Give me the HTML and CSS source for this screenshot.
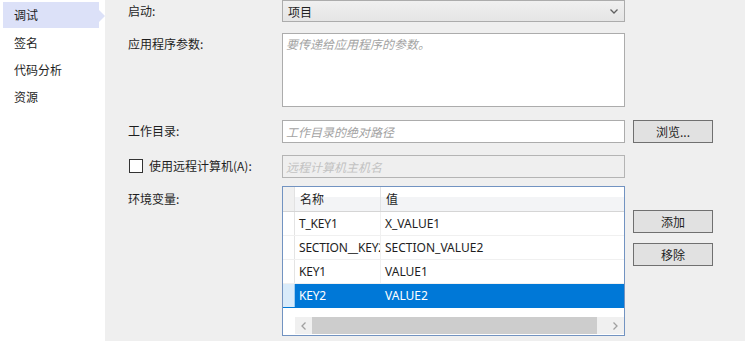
FILE: index.html
```html
<!DOCTYPE html>
<html lang="zh-CN">
<head>
    <meta charset="UTF-8">
    <title>调试</title>
    <link rel="stylesheet" href="styles.css">
</head>
<body>
    <div class="window">
        <ul class="nav">
            <li class="nav-item active">调试</li>
            <li class="nav-item">签名</li>
            <li class="nav-item">代码分析</li>
            <li class="nav-item">资源</li>
        </ul>

        <div class="page">
            <div class="row row-launch">
                <label class="label">启动:</label>
                <div class="select">
                    <span>项目</span>
                    <svg class="chevron" width="8" height="5" viewBox="0 0 8 5"><path d="M0.5 0.5 L4 4 L7.5 0.5" fill="none" stroke="#606060" stroke-width="1.3"/></svg>
                </div>
            </div>

            <div class="row row-args">
                <label class="label">应用程序参数:</label>
                <div class="textarea"><span class="placeholder">要传递给应用程序的参数。</span></div>
            </div>

            <div class="row row-dir">
                <label class="label">工作目录:</label>
                <div class="input"><span class="placeholder">工作目录的绝对路径</span></div>
                <button class="btn">浏览...</button>
            </div>

            <div class="row row-remote">
                <label class="label check-label"><span class="checkbox"></span>使用远程计算机(A):</label>
                <div class="input disabled"><span class="placeholder">远程计算机主机名</span></div>
            </div>

            <div class="row row-env">
                <label class="label">环境变量:</label>
                <div class="grid">
                    <div class="grid-head">
                        <div class="cell corner"></div>
                        <div class="cell col-name">名称</div>
                        <div class="cell">值</div>
                    </div>
                    <div class="grid-row">
                        <div class="cell rowhead"></div>
                        <div class="cell col-name">T_KEY1</div>
                        <div class="cell">X_VALUE1</div>
                    </div>
                    <div class="grid-row">
                        <div class="cell rowhead"></div>
                        <div class="cell col-name">SECTION__KEY2</div>
                        <div class="cell">SECTION_VALUE2</div>
                    </div>
                    <div class="grid-row">
                        <div class="cell rowhead"></div>
                        <div class="cell col-name">KEY1</div>
                        <div class="cell">VALUE1</div>
                    </div>
                    <div class="grid-row selected">
                        <div class="cell rowhead"></div>
                        <div class="cell col-name">KEY2</div>
                        <div class="cell">VALUE2</div>
                    </div>
                    <div class="grid-space"></div>
                    <div class="hscroll">
                        <div class="scroll-btn">
                            <svg width="5" height="8" viewBox="0 0 5 8"><path d="M4.5 0.5 L1 4 L4.5 7.5" fill="none" stroke="#a0a0a0" stroke-width="1.3"/></svg>
                        </div>
                        <div class="scroll-thumb"></div>
                        <div class="scroll-track"></div>
                        <div class="scroll-btn">
                            <svg width="5" height="8" viewBox="0 0 5 8"><path d="M0.5 0.5 L4 4 L0.5 7.5" fill="none" stroke="#a0a0a0" stroke-width="1.3"/></svg>
                        </div>
                    </div>
                </div>
                <div class="side-buttons">
                    <button class="btn">添加</button>
                    <button class="btn">移除</button>
                </div>
            </div>
        </div>
    </div>
</body>
</html>
```

FILE: styles.css
```css
/* General */
body {
    margin: 0;
    font-family: "Noto Sans CJK SC", "Noto Sans", sans-serif;
    font-size: 12px;
    color: #1e1e1e;
    background: #efefef;
}

.window {
    display: flex;
    width: 745px;
    height: 341px;
    overflow: hidden;
}

/* Sidebar */
.nav {
    list-style: none;
    margin: 0;
    padding: 2px 6px 0 3px;
    width: 96px;
    background: #fff;
}

.nav-item {
    position: relative;
    height: 27px;
    line-height: 27px;
    padding-left: 11px;
}

.nav-item.active {
    height: 26px;
    line-height: 26px;
    margin-bottom: 1px;
    background: #dce1f8;
}

.nav-item.active::after {
    content: "";
    position: absolute;
    right: -6px;
    top: 8px;
    border-top: 6px solid transparent;
    border-bottom: 6px solid transparent;
    border-left: 6px solid #dce1f8;
}

/* Form */
.page {
    flex: 1;
    padding-left: 23px;
}

.row {
    display: flex;
    align-items: flex-start;
}

.label {
    width: 154px;
    flex-shrink: 0;
    height: 22px;
    line-height: 22px;
}

.row-args { margin-top: 11px; }
.row-dir { margin-top: 13px; }
.row-remote { margin-top: 12px; }
.row-env { margin-top: 8px; }

.row-env .label {
    line-height: 26px;
}

.select, .textarea, .input {
    box-sizing: border-box;
    width: 343px;
    border: 1px solid #acacac;
    background: #fff;
}

.select {
    display: flex;
    align-items: center;
    justify-content: space-between;
    height: 22px;
    padding: 0 5px 0 5px;
    background: linear-gradient(#f0f0f0, #e5e5e5);
}

.chevron {
    margin-right: 1px;
}

.textarea {
    height: 74px;
    padding: 1px 3px;
    line-height: 18px;
}

.input {
    height: 23px;
    line-height: 21px;
    padding: 0 3px;
}

.input.disabled {
    background: #efefef;
    border-color: #b4b4b4;
}

.placeholder {
    font-style: italic;
    color: #a3a3a3;
}

.disabled .placeholder {
    color: #c2c2c2;
}

.check-label {
    display: flex;
    align-items: center;
    margin-left: 1px;
    width: 153px;
}

.checkbox {
    box-sizing: border-box;
    width: 14px;
    height: 14px;
    border: 1px solid #333;
    background: #fff;
    margin-right: 6px;
}

.btn {
    box-sizing: border-box;
    width: 80px;
    height: 23px;
    margin-left: 8px;
    padding: 0;
    font-family: inherit;
    font-size: 12px;
    color: #1e1e1e;
    background: #e1e1e1;
    border: 1px solid #707070;
}

.side-buttons {
    display: flex;
    flex-direction: column;
    gap: 10px;
    padding-top: 24px;
}

/* Data grid */
.grid {
    box-sizing: border-box;
    width: 343px;
    height: 150px;
    border: 1px solid #7293c1;
    background: #fff;
    font-family: "Segoe UI", "Noto Sans", "Noto Sans CJK SC", sans-serif;
}

.grid-head, .grid-row {
    display: grid;
    grid-template-columns: 12px 86px 1fr;
}

.grid-head {
    height: 24px;
    line-height: 24px;
    border-bottom: 1px solid #d5d5d5;
    background: linear-gradient(#fff 0, #fff 10px, #f3f4f6 10px);
    font-family: "Noto Sans CJK SC", sans-serif;
}

.grid-head .cell {
    padding-left: 5px;
}

.grid-head .col-name {
    border-right: 1px solid #e2e3e5;
}

.grid-head .corner {
    padding: 0;
    background: #f0f0f0;
    border-right: 1px solid #e2e2e2;
}

.grid-row {
    height: 23px;
    line-height: 23px;
    border-bottom: 1px solid #f0f0f0;
}

.cell {
    white-space: nowrap;
    overflow: hidden;
    padding-left: 4px;
}

.grid-row .col-name {
    border-right: 1px solid #f0f0f0;
    letter-spacing: -0.2px;
}

.rowhead {
    padding: 0;
    border-right: 1px solid #e4e4e4;
}

.grid-row.selected {
    border-bottom-color: #0078d7;
}

.grid-row.selected .cell {
    background: #0078d7;
    color: #fff;
    border-right: none;
}

.grid-row.selected .rowhead {
    background: #d9ebfa;
    border-right: 1px solid #9ccbf0;
}

.grid-space {
    height: 9px;
}

.hscroll {
    display: flex;
    height: 17px;
    margin-left: 12px;
}

.scroll-btn {
    width: 17px;
    display: flex;
    align-items: center;
    justify-content: center;
    background: #f0f0f0;
}

.scroll-thumb {
    width: 285px;
    background: #cdcdcd;
}

.scroll-track {
    flex: 1;
    background: #f0f0f0;
}
```
